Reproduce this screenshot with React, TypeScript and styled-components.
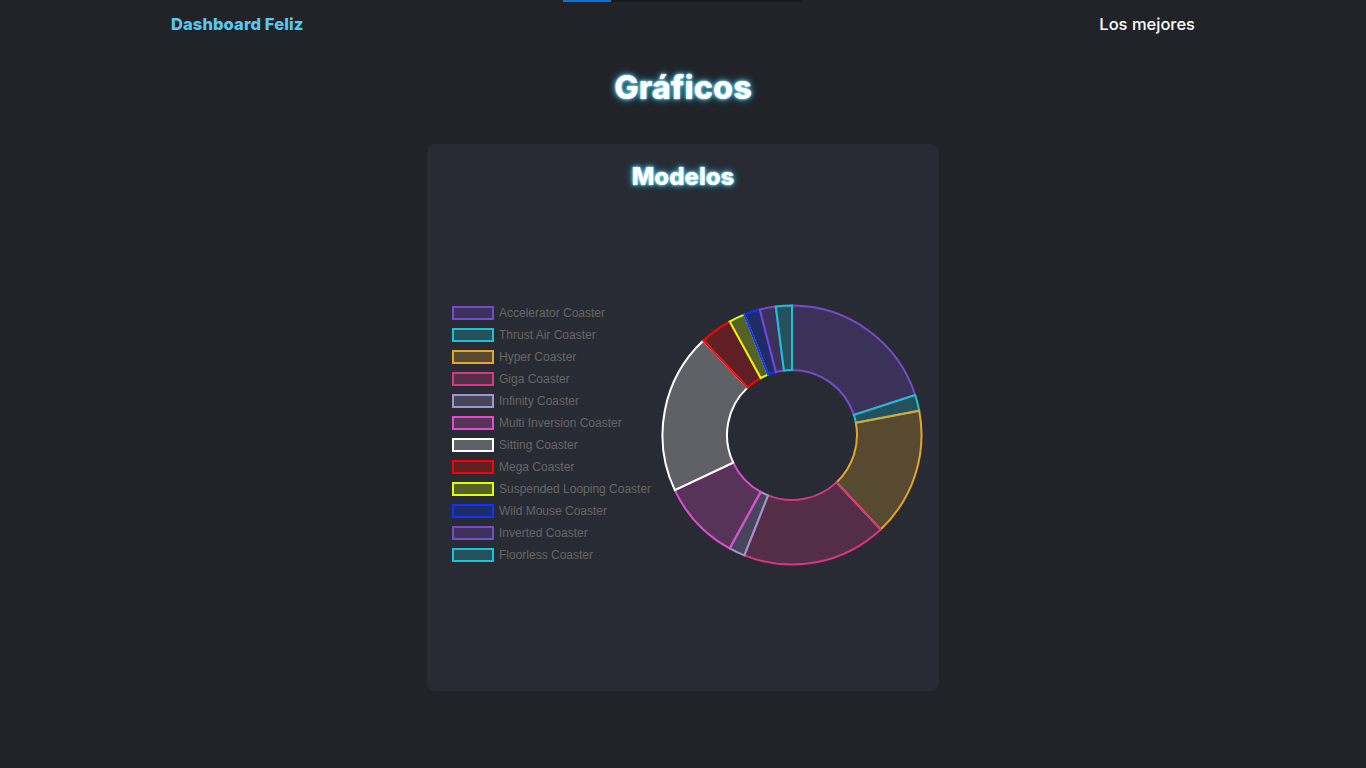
import React from "react";
import styled, { createGlobalStyle } from "styled-components";

const GlobalStyle = createGlobalStyle`
  html, body { margin: 0; padding: 0; background: #212329; }
  body { font-family: "Inter", "Open Sans", sans-serif; color: #fff; }
  * { box-sizing: border-box; }
`;

const Page = styled.div`
  min-height: 768px;
  background: #212329;
  display: flex;
  flex-direction: column;
  align-items: center;
`;

const TopStrip = styled.div`
  width: 240px;
  height: 2px;
  background: #18191d;
  display: flex;
`;

const StripFill = styled.div`
  width: 48px;
  height: 100%;
  background: #0a72dc;
`;

const Header = styled.header`
  width: 1024px;
  height: 44px;
  display: flex;
  align-items: center;
  justify-content: space-between;
`;

const Brand = styled.div`
  font-family: "Inter", sans-serif;
  font-weight: 800;
  font-size: 16.5px;
  color: #58c8f0;
  letter-spacing: 0.1px;
`;

const NavLink = styled.div`
  font-family: "Inter", sans-serif;
  font-weight: 500;
  font-size: 16.5px;
  color: #ffffff;
`;

const glow = `0 0 2px #bff2ff, 0 0 5px #45cdf5, 0 0 8px rgba(60, 200, 240, 0.6)`;

const Title = styled.h1`
  margin: 22px 0 0;
  font-family: "Inter", sans-serif;
  font-weight: 800;
  font-size: 32.5px;
  line-height: 40px;
  color: #ffffff;
  text-shadow: ${glow};
`;

const Card = styled.section`
  margin-top: 36px;
  width: 512px;
  height: 547px;
  background: #282b33;
  border-radius: 8px;
  padding: 18px 0 14px;
  display: flex;
  flex-direction: column;
  align-items: center;
`;

const CardTitle = styled.h2`
  margin: 0;
  font-family: "Inter", sans-serif;
  font-weight: 800;
  font-size: 24px;
  line-height: 30px;
  color: #ffffff;
  text-shadow: ${glow};
`;

const ChartRow = styled.div`
  width: 100%;
  height: 485px;
  display: flex;
  align-items: center;
  justify-content: space-between;
  padding: 0 16px 0 25px;
`;

const Legend = styled.ul`
  list-style: none;
  margin: 0 0 2px;
  padding: 0;
  display: flex;
  flex-direction: column;
`;

const LegendItem = styled.li`
  height: 22px;
  display: flex;
  align-items: center;
  font-family: "Liberation Sans", Arial, sans-serif;
  font-size: 12px;
  color: #666666;
`;

const Swatch = styled.span<{ $border: string; $fill: string }>`
  width: 42px;
  height: 14px;
  margin-right: 5px;
  border: 2px solid ${(p) => p.$border};
  background: ${(p) => p.$fill};
`;

type Slice = { label: string; value: number; rgb: [number, number, number] };

const data: Slice[] = [
  { label: "Accelerator Coaster", value: 10, rgb: [118, 74, 200] },
  { label: "Thrust Air Coaster", value: 1, rgb: [30, 192, 214] },
  { label: "Hyper Coaster", value: 8, rgb: [226, 165, 48] },
  { label: "Giga Coaster", value: 9, rgb: [214, 55, 132] },
  { label: "Infinity Coaster", value: 1, rgb: [158, 150, 204] },
  { label: "Multi Inversion Coaster", value: 5, rgb: [224, 76, 204] },
  { label: "Sitting Coaster", value: 10, rgb: [255, 255, 255] },
  { label: "Mega Coaster", value: 2, rgb: [255, 0, 0] },
  { label: "Suspended Looping Coaster", value: 1, rgb: [222, 255, 10] },
  { label: "Wild Mouse Coaster", value: 1, rgb: [10, 52, 255] },
  { label: "Inverted Coaster", value: 1, rgb: [118, 74, 200] },
  { label: "Floorless Coaster", value: 1, rgb: [30, 192, 214] },
];

const rgba = (c: [number, number, number], a: number) => `rgba(${c[0]}, ${c[1]}, ${c[2]}, ${a})`;

const ChartSvg = styled.svg`
  display: block;
  flex-shrink: 0;
`;

function Doughnut() {
  const size = 262;
  const cx = size / 2;
  const cy = size / 2;
  const R = 129.5;
  const r = 65;
  const total = data.reduce((s, d) => s + d.value, 0);
  let start = -Math.PI / 2;
  const paths = data.map((d, i) => {
    const sweep = (d.value / total) * Math.PI * 2;
    const end = start + sweep;
    const large = sweep > Math.PI ? 1 : 0;
    const p = (rad: number, a: number) => `${(cx + rad * Math.cos(a)).toFixed(3)} ${(cy + rad * Math.sin(a)).toFixed(3)}`;
    const path = `M ${p(R, start)} A ${R} ${R} 0 ${large} 1 ${p(R, end)} L ${p(r, end)} A ${r} ${r} 0 ${large} 0 ${p(r, start)} Z`;
    start = end;
    return (
      <path
        key={i}
        d={path}
        fill={rgba(d.rgb, 0.26)}
        stroke={rgba(d.rgb, 1)}
        strokeWidth={2}
        strokeLinejoin="miter"
      />
    );
  });
  return (
    <ChartSvg width={size} height={size} viewBox={`0 0 ${size} ${size}`}>
      {paths}
    </ChartSvg>
  );
}

export default function App() {
  return (
    <>
      <GlobalStyle />
      <Page>
        <TopStrip>
          <StripFill />
        </TopStrip>
        <Header>
          <Brand>Dashboard Feliz</Brand>
          <NavLink>Los mejores</NavLink>
        </Header>
        <Title>Gráficos</Title>
        <Card>
          <CardTitle>Modelos</CardTitle>
          <ChartRow>
            <Legend>
              {data.map((d) => (
                <LegendItem key={d.label}>
                  <Swatch $border={rgba(d.rgb, 1)} $fill={rgba(d.rgb, 0.26)} />
                  {d.label}
                </LegendItem>
              ))}
            </Legend>
            <Doughnut />
          </ChartRow>
        </Card>
      </Page>
    </>
  );
}
